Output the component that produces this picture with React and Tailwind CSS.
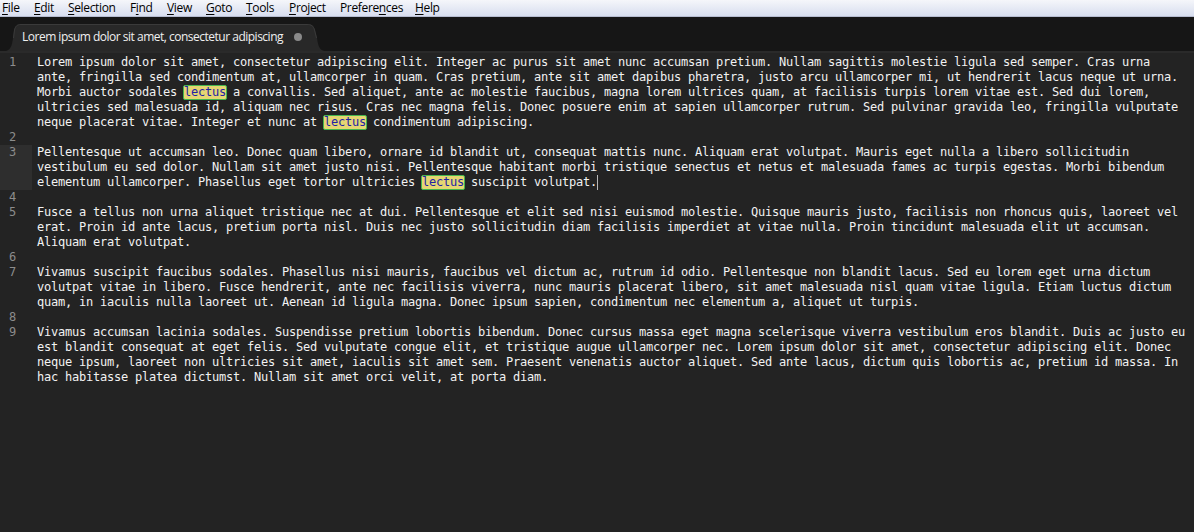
import React from "react";

const menu = [
  { pre: "", u: "F", post: "ile", w: 32 },
  { pre: "", u: "E", post: "dit", w: 34 },
  { pre: "", u: "S", post: "election", w: 62 },
  { pre: "F", u: "i", post: "nd", w: 37 },
  { pre: "", u: "V", post: "iew", w: 39 },
  { pre: "", u: "G", post: "oto", w: 40 },
  { pre: "", u: "T", post: "ools", w: 43 },
  { pre: "", u: "P", post: "roject", w: 51 },
  { pre: "Prefere", u: "n", post: "ces", w: 75 },
  { pre: "", u: "H", post: "elp", w: 40 },
];

const L = "__LECTUS__";

const lines = [
  {
    n: 1,
    v: [
      "Lorem ipsum dolor sit amet, consectetur adipiscing elit. Integer ac purus sit amet nunc accumsan pretium. Nullam sagittis molestie ligula sed semper. Cras urna",
      "ante, fringilla sed condimentum at, ullamcorper in quam. Cras pretium, ante sit amet dapibus pharetra, justo arcu ullamcorper mi, ut hendrerit lacus neque ut urna.",
      ["Morbi auctor sodales ", L, " a convallis. Sed aliquet, ante ac molestie faucibus, magna lorem ultrices quam, at facilisis turpis lorem vitae est. Sed dui lorem,"],
      "ultricies sed malesuada id, aliquam nec risus. Cras nec magna felis. Donec posuere enim at sapien ullamcorper rutrum. Sed pulvinar gravida leo, fringilla vulputate",
      ["neque placerat vitae. Integer et nunc at ", L, " condimentum adipiscing."],
    ],
  },
  { n: 2, v: [""] },
  {
    n: 3,
    current: true,
    v: [
      "Pellentesque ut accumsan leo. Donec quam libero, ornare id blandit ut, consequat mattis nunc. Aliquam erat volutpat. Mauris eget nulla a libero sollicitudin",
      "vestibulum eu sed dolor. Nullam sit amet justo nisi. Pellentesque habitant morbi tristique senectus et netus et malesuada fames ac turpis egestas. Morbi bibendum",
      ["elementum ullamcorper. Phasellus eget tortor ultricies ", L, " suscipit volutpat.", "__CURSOR__"],
    ],
  },
  { n: 4, v: [""] },
  {
    n: 5,
    v: [
      "Fusce a tellus non urna aliquet tristique nec at dui. Pellentesque et elit sed nisi euismod molestie. Quisque mauris justo, facilisis non rhoncus quis, laoreet vel",
      "erat. Proin id ante lacus, pretium porta nisl. Duis nec justo sollicitudin diam facilisis imperdiet at vitae nulla. Proin tincidunt malesuada elit ut accumsan.",
      "Aliquam erat volutpat.",
    ],
  },
  { n: 6, v: [""] },
  {
    n: 7,
    v: [
      "Vivamus suscipit faucibus sodales. Phasellus nisi mauris, faucibus vel dictum ac, rutrum id odio. Pellentesque non blandit lacus. Sed eu lorem eget urna dictum",
      "volutpat vitae in libero. Fusce hendrerit, ante nec facilisis viverra, nunc mauris placerat libero, sit amet malesuada nisl quam vitae ligula. Etiam luctus dictum",
      "quam, in iaculis nulla laoreet ut. Aenean id ligula magna. Donec ipsum sapien, condimentum nec elementum a, aliquet ut turpis.",
    ],
  },
  { n: 8, v: [""] },
  {
    n: 9,
    v: [
      "Vivamus accumsan lacinia sodales. Suspendisse pretium lobortis bibendum. Donec cursus massa eget magna scelerisque viverra vestibulum eros blandit. Duis ac justo eu",
      "est blandit consequat at eget felis. Sed vulputate congue elit, et tristique augue ullamcorper nec. Lorem ipsum dolor sit amet, consectetur adipiscing elit. Donec",
      "neque ipsum, laoreet non ultricies sit amet, iaculis sit amet sem. Praesent venenatis auctor aliquet. Sed ante lacus, dictum quis lobortis ac, pretium id massa. In",
      "hac habitasse platea dictumst. Nullam sit amet orci velit, at porta diam.",
    ],
  },
];

function VisualLine({ content }) {
  const parts = Array.isArray(content) ? content : [content];
  return (
    <div className="h-[15px] leading-[15px] whitespace-pre">
      {parts.map((p, i) => {
        if (p === L)
          return (
            <span
              key={i}
              className="inline-block align-top h-[15px] leading-[13px] -mx-px border border-[#44b54e] rounded-[2px] bg-[#e5d672] text-[#1e22a6]"
            >
              lectus
            </span>
          );
        if (p === "__CURSOR__")
          return (
            <span key={i} className="inline-block align-top w-px h-[15px] bg-[#b8b8b8]" />
          );
        return <span key={i}>{p}</span>;
      })}
    </div>
  );
}

export default function App() {
  return (
    <div className="w-[1194px] h-[532px] bg-[#232323] flex flex-col overflow-hidden">
      {/* Menu bar */}
      <div
        className="h-[17px] flex items-start pl-[2px] bg-gradient-to-b from-[#f5f6fa] to-[#d8deef] border-b border-[#b6bcd0] text-[12px] leading-[16px] text-black tracking-[-0.35px]"
        style={{ fontFamily: '"Open Sans", "Noto Sans", sans-serif' }}
      >
        {menu.map((m, i) => (
          <div key={i} className="shrink-0 whitespace-nowrap" style={{ width: m.w }}>
            {m.pre}
            <span className="underline underline-offset-[2px]">{m.u}</span>
            {m.post}
          </div>
        ))}
      </div>

      {/* Tab bar */}
      <div className="h-[34px] bg-[#161616] flex items-end pl-[5px] shrink-0">
        <div className="relative w-[320px] h-[27px]">
          <svg className="absolute inset-0" width="320" height="27" viewBox="0 0 320 27">
            <path
              d="M0,27 C5,27 7,22 8,14 L9,6 C10,2 12,0 16,0 L302,0 C307,0 309,2 310,6 L312,14 C313,22 315,27 320,27 Z"
              fill="#282828"
            />
            <path
              d="M8.5,14 L9.5,6 C10.5,2 12.5,0.5 16,0.5 L302,0.5 C306.5,0.5 308.5,2 309.5,6 L311.5,14"
              fill="none"
              stroke="#3a3a3a"
              strokeWidth="1"
            />
          </svg>
          <div
            className="relative flex items-center h-full pl-[17px] pb-[1px] text-[12px] text-[#f0f0f0]"
            style={{ fontFamily: '"Open Sans", "Noto Sans", sans-serif' }}
          >
            <span className="tracking-[-0.5px] whitespace-nowrap">Lorem ipsum dolor sit amet, consectetur adipiscing</span>
            <span className="ml-[11px] w-[8px] h-[8px] rounded-full bg-[#8a8a8a] shrink-0" />
          </div>
        </div>
      </div>

      {/* Editor */}
      <div
        className="flex-1 border-t-2 border-[#2a2a2a] pt-[2px] text-[12px] text-[#f2f2f2] tracking-[-0.225px]"
        style={{ fontFamily: '"DejaVu Sans Mono", "Liberation Mono", monospace' }}
      >
        {lines.map((ln) => (
          <div key={ln.n} className="flex">
            <div
              className={
                "w-[32px] shrink-0 pl-[9px] text-[#8c8c8c] leading-[15px] " +
                (ln.current ? "bg-[#2e2e2e]" : "")
              }
            >
              {ln.n}
            </div>
            <div className="pl-[5px]">
              {ln.v.map((c, i) => (
                <VisualLine key={i} content={c} />
              ))}
            </div>
          </div>
        ))}
      </div>
    </div>
  );
}
